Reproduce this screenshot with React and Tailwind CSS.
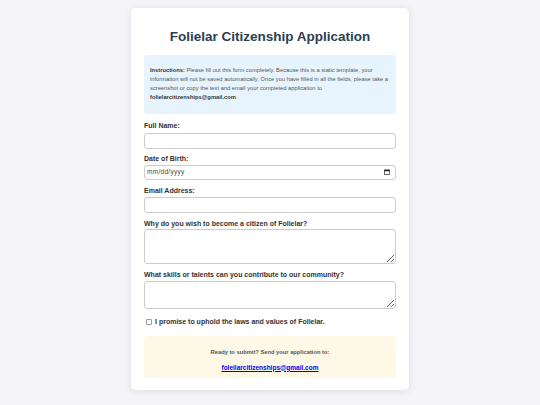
import React from "react";

const font = { fontFamily: '"Liberation Sans", Arial, sans-serif' };

export default function App() {
  return (
    <div
      className="min-h-[405px] w-full bg-[#f4f4f9] pt-[8px] pb-[15px]"
      style={font}
    >
      <div className="mx-auto w-[278px] rounded-[5px] bg-white px-[13px] pt-[21px] pb-[12px] shadow-[0_1px_8px_rgba(0,0,0,0.1)]">
        <h1 className="text-center text-[13.5px] font-bold leading-[16px] text-[#2c3e50]">
          Folielar Citizenship Application
        </h1>

        <div className="mt-[10px] rounded-[3px] bg-[#e8f4fd] px-[6px] pt-[11px] pb-[12px] text-[5.75px] leading-[9px] text-[#555]">
          <strong className="text-[#333]">Instructions:</strong> Please fill out
          this form completely. Because this is a static template, your
          information will not be saved automatically. Once you have filled in
          all the fields, please take a screenshot or copy the text and email
          your completed application to{" "}
          <strong className="text-[#333]">folielarcitizenships@gmail.com</strong>.
        </div>

        <form className="flex flex-col">
          <label className="mt-[7px] block text-[7px] font-bold leading-[9px] text-[#333]">
            Full Name:
          </label>
          <input
            type="text"
            className="mt-[3px] h-[15.5px] w-full rounded-[3px] border border-[#ccc] bg-white px-[3px] text-[7px] outline-none"
          />

          <label className="mt-[5px] block text-[7px] font-bold leading-[9px] text-[#333]">
            Date of Birth:
          </label>
          <div className="mt-[2px] flex h-[15.5px] w-full items-center justify-between rounded-[3px] border border-[#ccc] bg-white pl-[2px] pr-[5px]">
            <span className="text-[6.5px] tracking-[0.3px] text-[#444]">mm/dd/yyyy</span>
            <svg width="6" height="6" viewBox="0 0 12 12" className="block">
              <rect x="1" y="2" width="10" height="9" fill="none" stroke="#222" strokeWidth="1.4" />
              <rect x="1" y="2" width="10" height="2.5" fill="#222" />
              <rect x="3" y="0.5" width="1.2" height="2" fill="#222" />
              <rect x="7.8" y="0.5" width="1.2" height="2" fill="#222" />
            </svg>
          </div>

          <label className="mt-[6px] block text-[7px] font-bold leading-[9px] text-[#333]">
            Email Address:
          </label>
          <input
            type="email"
            className="mt-[2px] h-[15.5px] w-full rounded-[3px] border border-[#ccc] bg-white px-[3px] text-[7px] outline-none"
          />

          <label className="mt-[6px] block text-[7px] font-bold leading-[9px] text-[#333]">
            Why do you wish to become a citizen of Folielar?
          </label>
          <textarea className="mt-[1px] block h-[35px] w-full rounded-[3px] border border-[#ccc] bg-white px-[3px] text-[7px] outline-none" />

          <label className="mt-[6px] block text-[7px] font-bold leading-[9px] text-[#333]">
            What skills or talents can you contribute to our community?
          </label>
          <textarea className="mt-[2.5px] block h-[28px] w-full rounded-[3px] border border-[#ccc] bg-white px-[3px] text-[7px] outline-none" />

          <label className="mt-[8px] flex items-center text-[7px] font-bold leading-[9px] text-[#333]">
            <span className="ml-[2px] mr-[3px] inline-block h-[6px] w-[6px] rounded-[1px] border border-[#999] bg-white" />
            I promise to uphold the laws and values of Folielar.
          </label>
        </form>

        <div className="mt-[10px] rounded-[3px] bg-[#fef9e7] pt-[12px] pb-[6.5px] text-center">
          <p className="text-[5.75px] font-bold leading-[9px] text-[#555]">
            Ready to submit? Send your application to:
          </p>
          <p className="mt-[5.5px] text-[6.5px] font-bold leading-[9px]">
            <a href="#" className="text-[#0000ee] underline">
              foleilarcitizenships@gmail.com
            </a>
          </p>
        </div>
      </div>
    </div>
  );
}
